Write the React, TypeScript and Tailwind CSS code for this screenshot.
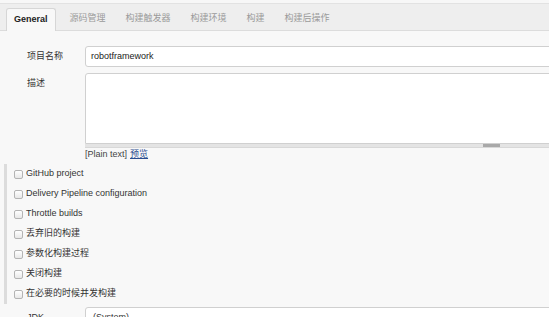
import React from "react";

const font = { fontFamily: '"Liberation Sans", Arial, "Noto Sans CJK SC", sans-serif' };

const tabs = ["源码管理", "构建触发器", "构建环境", "构建", "构建后操作"];

const options = [
  "GitHub project",
  "Delivery Pipeline configuration",
  "Throttle builds",
  "丢弃旧的构建",
  "参数化构建过程",
  "关闭构建",
  "在必要的时候并发构建",
];

function Checkbox() {
  return (
    <span className="block w-[9px] h-[9px] shrink-0 rounded-[2px] border border-[#b4b4b4] bg-gradient-to-b from-[#ffffff] to-[#e8e8e8]" />
  );
}

export default function App() {
  return (
    <div
      className="w-[549px] h-[317px] overflow-hidden bg-[#f8f8f8] text-[9px] text-[#333] flex flex-col"
      style={font}
    >
      {/* Tab bar */}
      <div className="h-[3px] bg-[#f7f7f7] shrink-0" />
      <div className="h-[28px] shrink-0 bg-[#eeeeee] border-t border-[#e2e2e2] border-b border-b-[#dcdcdc] flex items-end pl-[6px]">
        <div className="h-[23px] mb-[-1px] px-[7px] flex items-center bg-[#f8f8f8] border border-[#d6d6d6] border-b-0 rounded-t-[3px] font-bold text-[#222]">
          General
        </div>
        <div className="flex ml-[4px]">
          {tabs.map((t) => (
            <div key={t} className="h-[23px] px-[10px] flex items-center text-[#9a9a9a]">
              {t}
            </div>
          ))}
        </div>
      </div>

      {/* Form */}
      <div className="flex flex-col">
        <div className="flex mt-[15px]">
          <div className="w-[85px] pl-[27px] pt-[4px] shrink-0">项目名称</div>
          <div className="w-[480px] h-[21px] shrink-0 bg-white border border-[#d0d0d0] rounded-[3px] flex items-center pl-[5px] text-[#222]">
            robotframework
          </div>
        </div>

        <div className="flex mt-[6px]">
          <div className="w-[85px] pl-[27px] pt-[4px] shrink-0">描述</div>
          <div className="flex flex-col shrink-0">
            <div className="w-[480px] h-[71px] bg-white border border-[#d0d0d0] rounded-t-[3px]" />
            <div className="w-[480px] h-[4px] bg-[#e4e4e4] border-b border-[#d8d8d8] relative">
              <div className="absolute left-[398px] top-0 w-[17px] h-[3px] bg-[#a9a9a9]" />
            </div>
            <div className="h-[11px] mt-[1px] flex items-center leading-none">
              <span className="text-[#444]">[Plain text]</span>
              <span className="ml-[3px] text-[#2a4d8f] underline">预览</span>
            </div>
          </div>
        </div>

        {/* Options */}
        <div className="mt-[4px] ml-[4px] border-l-[3px] border-[#dcdcdc] flex flex-col">
          {options.map((o) => (
            <div key={o} className="h-[20px] flex items-center pl-[7px]">
              <Checkbox />
              <span className="ml-[3px] text-[#333]">{o}</span>
            </div>
          ))}
        </div>

        <div className="flex mt-[3px]">
          <div className="w-[85px] pl-[27px] pt-[4px] shrink-0">JDK</div>
          <div className="w-[480px] h-[21px] shrink-0 bg-white border border-[#d0d0d0] rounded-[3px] flex items-center pl-[7px]">
            (System)
          </div>
        </div>
      </div>
    </div>
  );
}
